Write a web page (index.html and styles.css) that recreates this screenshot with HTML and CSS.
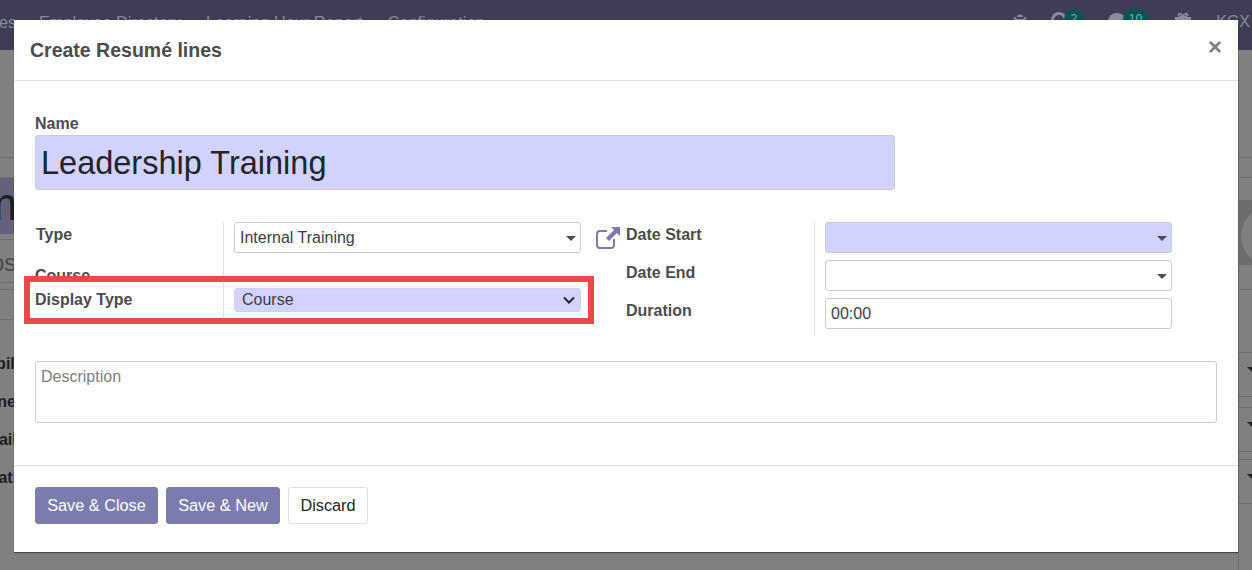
FILE: index.html
```html
<!DOCTYPE html>
<html lang="en">
<head>
<meta charset="utf-8">
<title>Create Resumé lines</title>
<link rel="stylesheet" href="styles.css">
</head>
<body>
<div class="app">
  <nav class="navbar">
    <span class="nav-cut">es</span>
    <span class="nav-link">Employee Directory</span>
    <span class="nav-link">Learning Hour Report</span>
    <span class="nav-link">Configuration</span>
    <span class="nav-tools">
      <svg class="ico-bug" width="16" height="16" viewBox="0 0 16 16"><path d="M5 4a3 2.5 0 0 1 6 0zM1 5l2-1 2 2h6l2-2 2 1-3 3v4H4V8z" fill="#8b8a99"/></svg>
      <span class="tool tool-clock"><span class="ring"></span><span class="badge">2</span></span>
      <span class="tool tool-chat"><span class="blob"></span><span class="badge">10</span></span>
      <svg class="ico-gift" width="18" height="18" viewBox="0 0 18 18"><path d="M1 5h16v4H1zM2 10h14v7H2z" fill="#8b8a99"/><path d="M9 5C8 1 5 1 4.500 2.500S6 5 9 5c3 0 5-1 4.500-2.500S10 1 9 5z" fill="none" stroke="#8b8a99" stroke-width="1.600"/></svg>
      <span class="user">KGX</span>
    </span>
  </nav>
  <div class="under">
    <div class="sliver-left">
      <div class="sl s1"></div>
      <div class="sl s2"></div>
      <div class="sl s3"><span class="big-cut">m</span></div>
      <div class="sl s4"></div>
      <div class="sl s5"><span class="os-cut">os</span></div>
      <div class="sl s6"></div>
      <div class="sl s7"></div>
      <div class="cut-labels">
        <span class="cut-mobile">Mobile</span>
        <span class="cut-phone">Phone</span>
        <span class="cut-email">Email</span>
        <span class="cut-location">Location</span>
      </div>
    </div>
    <div class="sliver-right">
      <div class="sr r1"></div>
      <div class="sr r2"></div>
      <div class="sr r3"><span class="photo"><span class="photo-arc"></span></span></div>
      <div class="sr r4"></div>
      <div class="sr r5"><span class="cut-caret"></span></div>
      <div class="sr r6"></div>
      <div class="sr r7"><span class="cut-caret"></span></div>
      <div class="sr r8"></div>
      <div class="sr r9"><span class="cut-caret"></span></div>
    </div>
  </div>
</div>

<section class="modal">
  <header class="modal-head">
    <h4 class="modal-title">Create Resumé lines</h4>
    <span class="close">×</span>
  </header>
  <div class="modal-body">
    <label class="name-label">Name</label>
    <input class="name-input" type="text" value="Leadership Training">
    <div class="columns">
      <div class="group group-left">
        <div class="row row-type">
          <span class="label">Type</span>
          <span class="cell"><span class="field"><span class="val">Internal Training</span><i class="caret"></i></span></span>
        </div>
        <div class="row row-course">
          <span class="label">Course</span>
          <span class="cell"></span>
        </div>
        <div class="row row-display">
          <span class="label">Display Type</span>
          <span class="cell"><span class="field select-focus"><span class="val">Course</span>
            <svg class="chevron" width="12" height="8" viewBox="0 0 12 8"><path d="M1 1.5l5 5 5-5" fill="none" stroke="#212529" stroke-width="2"/></svg></span></span>
        </div>
      </div>
      <svg class="ext-link" width="26" height="24" viewBox="0 0 26 24">
        <path d="M12 5H5a3 3 0 0 0-3 3v11a3 3 0 0 0 3 3h11a3 3 0 0 0 3-3v-6" fill="none" stroke="#7c7bad" stroke-width="2"/>
        <path d="M16 1h9v9l-3-3-8 8-3-3 8-8z" fill="#7c7bad"/>
      </svg>
      <div class="group group-right">
        <div class="row">
          <span class="label">Date Start</span>
          <span class="cell"><span class="field focus"><i class="caret"></i></span></span>
        </div>
        <div class="row">
          <span class="label">Date End</span>
          <span class="cell"><span class="field"><i class="caret"></i></span></span>
        </div>
        <div class="row">
          <span class="label">Duration</span>
          <span class="cell"><input class="field field-input" type="text" value="00:00"></span>
        </div>
      </div>
    </div>
    <textarea class="description" placeholder="Description"></textarea>
  </div>
  <footer class="modal-foot">
    <button class="btn btn-primary">Save &amp; Close</button>
    <button class="btn btn-primary">Save &amp; New</button>
    <button class="btn btn-plain">Discard</button>
  </footer>
</section>
</body>
</html>
```
FILE: styles.css
```css
* { box-sizing: border-box; }
html, body { margin: 0; height: 100%; }
body {
  width: 1252px;
  height: 570px;
  overflow: hidden;
  position: relative;
  background: #808080;
  font-family: "Liberation Sans", Arial, sans-serif;
  color: #212529;
}

/* page dimmed behind the dialog */
.app { height: 570px; overflow: hidden; }
.navbar {
  height: 50px;
  background: #3f3d56;
  display: flex;
  align-items: flex-start;
  padding-top: 12px;
  color: #8b8a99;
  font-size: 16.3px;
  line-height: 20px;
  white-space: nowrap;
}
.nav-cut { width: 40px; margin-left: -1px; flex: none; }
.nav-link { margin-right: 25px; }
.nav-tools { margin-left: auto; display: flex; align-items: flex-start; }
.ico-bug { margin-top: 1px; margin-right: 23px; }
.tool { display: flex; align-items: flex-start; }
.tool-clock { margin-right: 24px; }
.tool-chat { margin-right: 26px; }
.ring { width: 16px; height: 16px; border: 3px solid #8b8a99; border-radius: 50%; }
.blob { width: 18px; height: 16px; margin-top: 1px; border-radius: 50%; background: #8b8a99; }
.badge {
  margin: -3px 0 0 -3px;
  min-width: 20px;
  height: 20px;
  padding: 0 6px;
  border-radius: 10px;
  background: #00574f;
  color: #8fa9a6;
  font-size: 12px;
  line-height: 20px;
  text-align: center;
}
.ico-gift { margin-right: 24px; }
.user { margin-right: 2px; font-size: 16px; }

.under { display: flex; justify-content: space-between; height: 520px; }
.sliver-left { width: 14px; overflow: hidden; }
.sliver-right { width: 14px; overflow: hidden; border-left: 1px solid #6d6d6d; }
.sl, .sr { border-bottom: 1px solid #6d6d6d; }
.s1 { height: 108px; }
.s2 { height: 20px; }
.s3 { height: 56px; background: #636079; border-bottom: 0; overflow: hidden; line-height: 52px; font-size: 46px; color: #1d1d24; }
.big-cut { display: block; margin-left: -21px; }
.s4 { height: 6px; }
.s5 { height: 43px; color: #4a4a4a; font-size: 24px; line-height: 46px; overflow: hidden; }
.os-cut { display: block; margin-left: -9px; }
.s6 { height: 7px; }
.s7 { height: 30px; }
.cut-labels { display: flex; flex-direction: column; gap: 17px; margin-top: 33px; font-size: 16px; line-height: 21px; font-weight: bold; color: #1d1d1d; white-space: nowrap; }
.cut-labels span { display: block; }
.cut-mobile { margin-left: -27px; }
.cut-phone { margin-left: -33px; }
.cut-email { margin-left: -26px; }
.cut-location { margin-left: -30px; }
.r1 { height: 108px; }
.r2 { height: 20px; }
.r3 { height: 112px; padding-top: 22px; }
.photo { display: block; height: 65px; background: #6c6c6c; overflow: hidden; }
.photo-arc { display: block; width: 60px; height: 60px; margin: 6px 0 0 2px; border: 14px solid #808080; border-radius: 50%; }
.r4 { height: 63px; }
.r5 { height: 30px; }
.r6 { height: 11px; }
.r7 { height: 30px; }
.r8 { height: 8px; }
.r9 { height: 30px; }
.cut-caret { display: block; margin: 14px 0 0 8px; width: 0; height: 0; border-top: 5px solid #222; border-left: 5px solid transparent; border-right: 5px solid transparent; }

/* dialog */
.modal {
  position: absolute;
  left: 14px;
  top: 20px;
  width: 1224px;
  height: 532px;
  background: #fff;
  box-shadow: 0 1px 1px rgba(0,0,0,.45);
  display: flex;
  flex-direction: column;
}
.modal-head {
  height: 61px;
  flex: none;
  border-bottom: 1px solid #dee2e6;
  display: flex;
  justify-content: space-between;
  padding: 0 16px 0 16px;
}
.modal-title { margin: 0; font-size: 19.5px; line-height: 60px; font-weight: bold; color: #4c4c4c; }
.close { font-size: 24px; line-height: 54px; font-weight: bold; color: #808080; }

.modal-body { flex: 1; padding: 33px 21px 0; }
.name-label { display: block; height: 21px; font-size: 16px; line-height: 19px; font-weight: bold; color: #4c4c4c; }
.name-input {
  display: block;
  width: 860px;
  height: 55px;
  margin: 0;
  padding: 2px 5px 0;
  border: 1px solid #ccc;
  border-radius: 3px;
  background: #d2d2ff;
  font: 32.5px "Liberation Sans", Arial, sans-serif;
  color: #212529;
  outline: 0;
}
.columns { display: flex; align-items: flex-start; margin-top: 32px; }
.group-left { width: 546px; }
.group-right { width: 546px; }
.ext-link { flex: none; margin: 4px 5px 0 14px; }
.row { display: flex; }
.label {
  width: 188px;
  flex: none;
  padding-top: 2px;
  font-size: 16px;
  line-height: 21px;
  font-weight: bold;
  color: #4c4c4c;
  white-space: nowrap;
}
.group-left .row-type .label { padding-left: 1px; }
.cell { flex: 1; min-width: 0; border-left: 1px solid #dee2e6; padding: 0 0 7px 10px; }
.field {
  display: flex;
  align-items: center;
  justify-content: space-between;
  width: 347px;
  height: 31px;
  padding: 0 4px 0 5px;
  border: 1px solid #ccc;
  border-radius: 3px;
  background: #fff;
  font: 16px "Liberation Sans", Arial, sans-serif;
  color: #3d3d3d;
}
.field-input { margin: 0; outline: 0; }
.focus { background: #d2d2ff; }
.val { white-space: nowrap; }
.caret { width: 0; height: 0; margin-left: auto; margin-top: 1px; border-top: 5px solid #4c4c4c; border-left: 5px solid transparent; border-right: 5px solid transparent; }

.row-course { height: 28px; }
.row-course .label { padding-top: 5px; }
.row-course .cell { padding: 0; }
.row-display { position: relative; height: 30px; }
.row-display::before {
  content: "";
  position: absolute;
  left: -11px;
  right: -13px;
  top: -12px;
  bottom: -6px;
  border: 6px solid #e94a47;
  background: #fff;
}
.row-display .label { position: relative; padding-top: 1px; }
.row-display .cell { position: relative; margin-top: -6px; padding: 6px 0 6px 10px; }
.select-focus { height: 24px; padding: 0 5px 1px 7px; background: #d2d2ff; border-color: #d0d0e8; }
.chevron { flex: none; }

.description {
  display: block;
  width: 1182px;
  height: 62px;
  margin: 25px 0 0;
  padding: 6px 5px;
  border: 1px solid #ccc;
  border-radius: 3px;
  font: 16px "Liberation Sans", Arial, sans-serif;
  resize: none;
  outline: 0;
}
.description::placeholder { color: #808080; opacity: 1; }

.modal-foot {
  height: 87px;
  flex: none;
  border-top: 1px solid #dee2e6;
  display: flex;
  align-items: flex-start;
  gap: 8px;
  padding: 21px 21px 0;
}
.btn {
  height: 37px;
  padding: 0;
  border-radius: 3px;
  font: 16.3px "Liberation Sans", Arial, sans-serif;
}
.btn-primary { background: #7c7bad; border: 1px solid #7c7bad; color: #fff; width: 123px; }
.btn-primary + .btn-primary { width: 114px; }
.btn-plain { background: #fff; border: 1px solid #e0e0e0; color: #212529; width: 80px; }
```
